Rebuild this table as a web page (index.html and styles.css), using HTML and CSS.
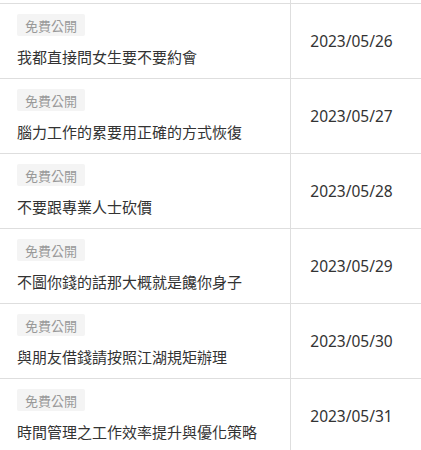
FILE: index.html
```html
<!DOCTYPE html>
<html lang="zh-Hant">
<head>
<meta charset="utf-8">
<link rel="stylesheet" href="styles.css">
</head>
<body>
<div class="list">
  <div class="row stub"><div class="main"></div><div class="date"></div></div>
  <div class="row">
    <div class="main"><span class="badge">免費公開</span><div class="title">我都直接問女生要不要約會</div></div>
    <div class="date">2023/05/26</div>
  </div>
  <div class="row">
    <div class="main"><span class="badge">免費公開</span><div class="title">腦力工作的累要用正確的方式恢復</div></div>
    <div class="date">2023/05/27</div>
  </div>
  <div class="row">
    <div class="main"><span class="badge">免費公開</span><div class="title">不要跟專業人士砍價</div></div>
    <div class="date">2023/05/28</div>
  </div>
  <div class="row">
    <div class="main"><span class="badge">免費公開</span><div class="title">不圖你錢的話那大概就是饞你身子</div></div>
    <div class="date">2023/05/29</div>
  </div>
  <div class="row">
    <div class="main"><span class="badge">免費公開</span><div class="title">與朋友借錢請按照江湖規矩辦理</div></div>
    <div class="date">2023/05/30</div>
  </div>
  <div class="row">
    <div class="main"><span class="badge">免費公開</span><div class="title">時間管理之工作效率提升與優化策略</div></div>
    <div class="date">2023/05/31</div>
  </div>
</div>
</body>
</html>
```

FILE: styles.css
```css
html, body {
  margin: 0;
  padding: 0;
  background: #fff;
}
body {
  font-family: "Noto Sans CJK TC", "Noto Sans", sans-serif;
  color: #333;
  overflow: hidden;
}
.list {
  width: 421px;
}
.row {
  display: grid;
  grid-template-columns: 290px 1fr;
  border-bottom: 1px solid #dedede;
}
.stub {
  height: 3px;
}
.main {
  padding: 10px 0 10px 17px;
  display: flex;
  flex-direction: column;
  align-items: flex-start;
  gap: 10px;
}
.stub .main {
  padding: 0;
}
.badge {
  display: inline-flex;
  align-items: center;
  height: 22px;
  padding: 0 8px;
  background: #f4f4f4;
  color: #999;
  font-size: 13px;
  border-radius: 2px;
}
.title {
  font-size: 15px;
  line-height: 22px;
  height: 22px;
  color: #333;
  white-space: nowrap;
}
.date {
  border-left: 1px solid #dedede;
  display: flex;
  align-items: center;
  justify-content: center;
  padding-right: 9px;
  font-family: "Noto Sans", "Open Sans", sans-serif;
  font-size: 15.5px;
  color: #333;
}
```
